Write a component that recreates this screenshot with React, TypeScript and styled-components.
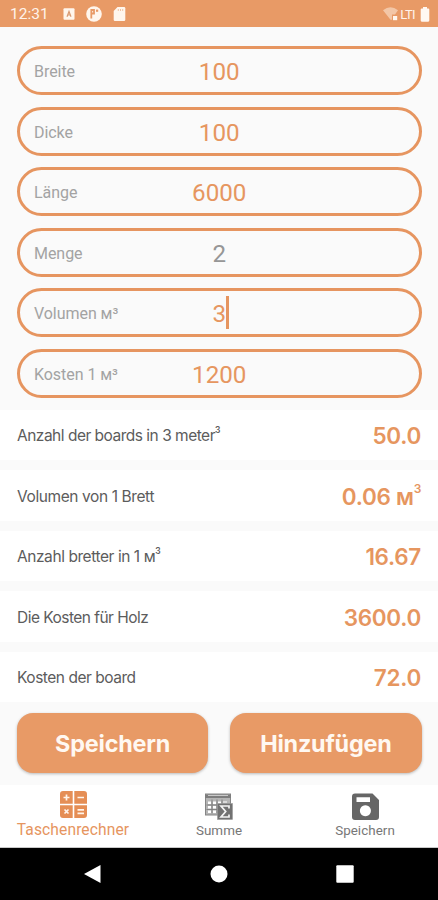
import React from "react";
import styled, { createGlobalStyle } from "styled-components";

const ORANGE = "#e89a66";

const GlobalStyle = createGlobalStyle`
  *, *::before, *::after { box-sizing: border-box; }
  html, body { margin: 0; padding: 0; }
  body { background: #fafafa; }
`;

const Screen = styled.div`
  width: 438px;
  height: 900px;
  display: flex;
  flex-direction: column;
  overflow: hidden;
  background: #fafafa;
  font-family: Roboto, sans-serif;
`;

const StatusBar = styled.header`
  height: 27px;
  flex: none;
  display: flex;
  align-items: center;
  padding: 1px 8px 0 10px;
  background: ${ORANGE};
  color: #fff3ea;
`;

const Clock = styled.span`
  width: 53px;
  font-size: 15.5px;
  line-height: 27px;
`;

const Notifications = styled.div`
  display: flex;
  align-items: center;
  gap: 11px;
  svg { display: block; }
`;

const Signals = styled.div`
  margin-left: auto;
  display: flex;
  align-items: center;
  svg { display: block; }
`;

const Network = styled.span`
  margin: 0 5px 0 1px;
  white-space: nowrap;
  font-size: 13px;
  letter-spacing: -0.6px;
  line-height: 27px;
`;

const Fields = styled.form`
  flex: none;
  height: 382.5px;
  display: flex;
  flex-direction: column;
  gap: 11.5px;
  padding: 19px 16.5px 0 17px;
`;

const Field = styled.label`
  height: 49px;
  flex: none;
  display: grid;
  grid-template-columns: 1fr auto 1fr;
  align-items: center;
  padding: 3px 14px 0;
  border: 3px solid #e69560;
  border-radius: 25px;
`;

const FieldLabel = styled.span`
  font-size: 16px;
  line-height: 20px;
  letter-spacing: -0.05px;
  color: #a3a3a3;
`;

const FieldValue = styled.span<{ $muted?: boolean }>`
  display: flex;
  align-items: center;
  position: relative;
  font-size: 24.2px;
  line-height: 30px;
  color: ${(p) => (p.$muted ? "#969696" : "#e69660")};
`;

const Caret = styled.i`
  position: absolute;
  left: 100%;
  top: -3px;
  width: 2.5px;
  height: 33px;
  background: #e69560;
`;

const Results = styled.section`
  flex: none;
  display: flex;
  flex-direction: column;
  gap: 10px;
`;

const ResultRow = styled.div`
  height: 50.5px;
  display: flex;
  align-items: center;
  justify-content: space-between;
  padding: 3px 17px 0;
  background: #fff;
  font-family: Inter, sans-serif;
`;

const ResultName = styled.span<{ $tracking: number }>`
  font-size: 15.5px;
  line-height: 24px;
  letter-spacing: ${(p) => p.$tracking}px;
  color: #5c5c5c;
`;

const ResultValue = styled.span`
  font-size: 22.5px;
  font-weight: 600;
  line-height: 28px;
  letter-spacing: -0.3px;
  color: #e6965f;
`;

const Power = styled.sup<{ $bold?: boolean }>`
  display: inline-block;
  position: relative;
  top: ${(p) => (p.$bold ? "-12px" : "-8px")};
  font-size: ${(p) => (p.$bold ? "12px" : "8.5px")};
  font-weight: 600;
  line-height: 0;
  vertical-align: baseline;
`;

const Actions = styled.div`
  flex: none;
  height: 83px;
  display: flex;
  gap: 22px;
  padding: 10.5px 16.5px 0 17px;
`;

const ActionButton = styled.button`
  flex: 1;
  height: 60.5px;
  padding: 3px 0 0;
  border: 0;
  border-radius: 16px;
  background: ${ORANGE};
  box-shadow: 0 1px 3px rgba(0, 0, 0, 0.26);
  color: #fff8f1;
  font: 700 23.4px/30px Inter, sans-serif;
  letter-spacing: -0.2px;
`;

const TabBar = styled.nav`
  flex: none;
  height: 63px;
  display: grid;
  grid-template-columns: repeat(3, 1fr);
  background: #fff;
  border-bottom: 1px solid #c8c8c8;
`;

const Tab = styled.a<{ $active?: boolean }>`
  display: flex;
  flex-direction: column;
  align-items: center;
  padding-top: ${(p) => (p.$active ? "6px" : "8px")};
  color: ${(p) => (p.$active ? "#e69560" : "#777")};
  font-size: ${(p) => (p.$active ? "15.6px" : "13.4px")};
  line-height: 18px;
  letter-spacing: ${(p) => (p.$active ? "0.1px" : "0.05px")};
  svg { display: block; margin-bottom: ${(p) => (p.$active ? "3px" : "2px")}; }
`;

const SystemBar = styled.footer`
  flex: 1;
  display: grid;
  grid-template-columns: 126px 126px 126px;
  justify-content: center;
  align-items: center;
  justify-items: center;
  background: #000;
  svg { display: block; }
`;

const CalculatorIcon = () => (
  <svg width="27" height="27" viewBox="0 0 27 27">
    <path
      fill="#e58e55"
      d="M3 0H12.7V12.7H0V3Q0 0 3 0ZM14.3 0H24Q27 0 27 3V12.7H14.3ZM0 14.3H12.7V27H3Q0 27 0 24ZM14.3 14.3H27V24Q27 27 24 27H14.3Z"
    />
    <path
      stroke="#fff5ec"
      strokeWidth="1.7"
      fill="none"
      d="M3.5 6.5h6M6.5 3.5v6M17.5 6.5h6.500M17.500 18.800h6.500M17.500 22.400h6.500M4.500 18.500l4 4M8.500 18.500l-4 4"
    />
  </svg>
);

const SumIcon = () => (
  <svg width="28" height="27" viewBox="0 0 28 27">
    <rect x="0.5" y="1" width="25" height="21" fill="#b5b5b5" stroke="#858585" />
    <path d="M0 1.5h26v3.5H0z" fill="#7d7d7d" />
    <path d="M3 2.5h20" stroke="#c9c9c9" strokeWidth="1" />
    <path
      d="M3 8.5h3v2.5H3zM8 8.5h3v2.5H8zM13 8.5h3v2.5h-3zM18 8.5h4v1h-4zM3 13h3v2.5H3zM8 13h3v2.5H8zM3 17.5h3V20H3zM8 17.5h3V20H8z"
      fill="#fff"
    />
    <path d="M7 6.5v14M12 6.5v14M17 6.5v5M1.5 12H12M1.5 16.5H12" stroke="#777" strokeWidth="0.8" />
    <rect x="12.5" y="10.5" width="15" height="16" fill="#727272" stroke="#999" strokeWidth="0.6" />
    <path d="M24 15.5V13h-8l4.7 5.5L16 24h8v-2.5" fill="none" stroke="#f4f4f4" strokeWidth="1.7" />
  </svg>
);

const SaveIcon = () => (
  <svg width="27" height="27" viewBox="0 0 27 27">
    <path
      fill="#666"
      fillRule="evenodd"
      d="M3 .5H20.5L27 7V24Q27 27 24 27H3Q0 27 0 24V3.5Q0 .5 3 .5ZM4.5 4.2V9H18V4.2ZM13.4 12.2a5.5 5.5 0 1 0 .01 0Z"
    />
  </svg>
);

const fields = [
  { label: "Breite", value: "100" },
  { label: "Dicke", value: "100" },
  { label: "Länge", value: "6000" },
  { label: "Menge", value: "2", muted: true },
  { label: "Volumen м³", value: "3", focused: true },
  { label: "Kosten 1 м³", value: "1200" },
];

const results = [
  { name: "Anzahl der boards in 3 meter", power: true, value: "50.0", tracking: -0.5 },
  { name: "Volumen von 1 Brett", value: "0.06 м", valuePower: true, tracking: -0.4 },
  { name: "Anzahl bretter in 1 м", power: true, value: "16.67", tracking: -0.43 },
  { name: "Die Kosten für Holz", value: "3600.0", tracking: -0.53 },
  { name: "Kosten der board", value: "72.0", tracking: -0.48 },
];

export default function App() {
  return (
    <Screen>
      <GlobalStyle />
      <StatusBar>
        <Clock>12:31</Clock>
        <Notifications>
          <svg width="12" height="12" viewBox="0 0 12 12">
            <rect x="0.5" y="0.3" width="11" height="11.5" rx="1" fill="#fff6ed" />
            <path d="M4 8.700 6 3.500 8 8.700M4.600 7h2.800" fill="none" stroke="#d99a72" strokeWidth="1.2" />
          </svg>
          <svg width="16" height="16" viewBox="0 0 16 16">
            <circle cx="8" cy="8" r="7.8" fill="#fff6ed" />
            <path d="M5.300 3v9.500M5.300 4H8v3.500H5.300" fill="none" stroke={ORANGE} strokeWidth="1.8" />
            <path d="M10 3.600h2.200v2.200H10z" fill={ORANGE} />
          </svg>
          <svg width="13" height="14" viewBox="0 0 13 14">
            <path d="M4.5 0H11q1.300 0 1.300 1.300v11.400Q12.300 14 11 14H2Q.7 14 .7 12.700V4Z" fill="#fff6ed" />
            <path d="M5.300 2v2M7.500 2v2M9.700 2v2" stroke="#efc3a3" strokeWidth="1" />
          </svg>
        </Notifications>
        <Signals>
          <svg width="16" height="14" viewBox="0 0 16 14">
            <path d="M0 3.200Q7.500-2.800 15 3.200L12 7.500H9v5.200H7.500Z" fill="#f3c6a6" />
            <path d="M10 9h4.200v4.200H10z" fill="#fff6ed" />
          </svg>
          <Network>LTI</Network>
          <svg width="10" height="15" viewBox="0 0 10 15">
            <path d="M3 0h4v1.500h1.200q1.100 0 1.100 1.100v11q0 1.100-1.100 1.100H1.800Q.7 14.700.7 13.600v-11Q.7 1.500 1.800 1.500H3Z" fill="#fff8f2" />
          </svg>
        </Signals>
      </StatusBar>

      <Fields>
        {fields.map((f) => (
          <Field key={f.label}>
            <FieldLabel>{f.label}</FieldLabel>
            <FieldValue $muted={f.muted}>
              {f.value}
              {f.focused && <Caret />}
            </FieldValue>
          </Field>
        ))}
      </Fields>

      <Results>
        {results.map((r) => (
          <ResultRow key={r.name}>
            <ResultName $tracking={r.tracking}>
              {r.name}
              {r.power && <Power>3</Power>}
            </ResultName>
            <ResultValue>
              {r.value}
              {r.valuePower && <Power $bold>3</Power>}
            </ResultValue>
          </ResultRow>
        ))}
      </Results>

      <Actions>
        <ActionButton>Speichern</ActionButton>
        <ActionButton>Hinzufügen</ActionButton>
      </Actions>

      <TabBar>
        <Tab $active>
          <CalculatorIcon />
          Taschenrechner
        </Tab>
        <Tab>
          <SumIcon />
          Summe
        </Tab>
        <Tab>
          <SaveIcon />
          Speichern
        </Tab>
      </TabBar>

      <SystemBar>
        <svg width="18" height="20" viewBox="0 0 18 20">
          <path d="M0 10 16.500 1V19Z" fill="#fff" />
        </svg>
        <svg width="18" height="18" viewBox="0 0 18 18">
          <circle cx="9" cy="9" r="8.500" fill="#fff" />
        </svg>
        <svg width="18" height="18" viewBox="0 0 18 18">
          <rect x="0.300" y="0.300" width="17.400" height="17.400" rx="1" fill="#fff" />
        </svg>
      </SystemBar>
    </Screen>
  );
}
